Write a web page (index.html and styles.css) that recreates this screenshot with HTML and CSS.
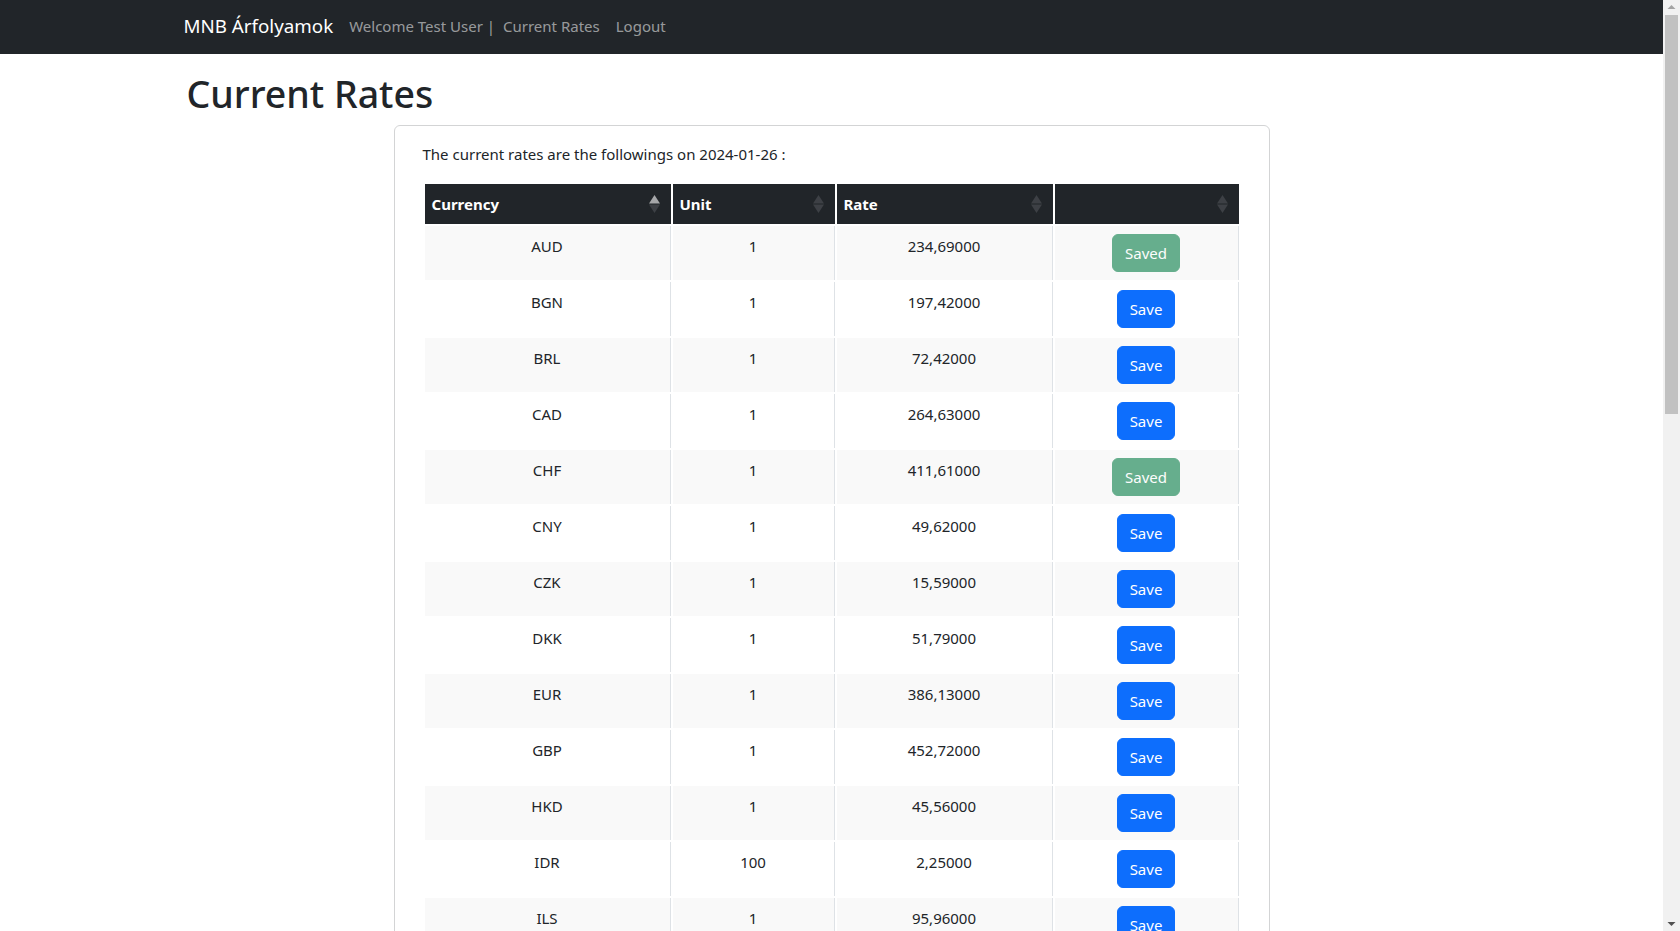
FILE: index.html
```html
<!DOCTYPE html>
<html lang="hu">
<head>
<meta charset="utf-8">
<title>MNB Árfolyamok</title>
<link rel="stylesheet" href="styles.css">
</head>
<body>
<div class="page">
<nav class="navbar">
  <div class="container nav-inner">
    <a class="brand" href="#">MNB Árfolyamok</a>
    <span class="nav-text">Welcome Test User |</span>
    <a class="nav-link" href="#">Current Rates</a>
    <a class="nav-link" href="#">Logout</a>
  </div>
</nav>
<main class="container main">
  <h1 class="title">Current Rates</h1>
  <div class="card">
    <p class="intro">The current rates are the followings on 2024-01-26 :</p>
    <table class="rates">
      <colgroup>
        <col class="c1"><col class="c2"><col class="c3"><col class="c4">
      </colgroup>
      <thead>
        <tr>
          <th><div class="th-inner"><span>Currency</span><svg class="sort" width="11" height="18" viewBox="0 0 11 18"><polygon class="on" points="5.5,0 11,8.5 0,8.5"/><polygon class="off" points="0,9.5 11,9.5 5.5,18"/></svg></div></th>
          <th><div class="th-inner"><span>Unit</span><svg class="sort" width="11" height="18" viewBox="0 0 11 18"><polygon class="off" points="5.5,0 11,8.5 0,8.5"/><polygon class="off" points="0,9.5 11,9.5 5.5,18"/></svg></div></th>
          <th><div class="th-inner"><span>Rate</span><svg class="sort" width="11" height="18" viewBox="0 0 11 18"><polygon class="off" points="5.5,0 11,8.5 0,8.5"/><polygon class="off" points="0,9.5 11,9.5 5.5,18"/></svg></div></th>
          <th><div class="th-inner"><span></span><svg class="sort" width="11" height="18" viewBox="0 0 11 18"><polygon class="off" points="5.5,0 11,8.5 0,8.5"/><polygon class="off" points="0,9.5 11,9.5 5.5,18"/></svg></div></th>
        </tr>
      </thead>
      <tbody>
        <tr><td>AUD</td><td>1</td><td>234,69000</td><td><button class="btn btn-saved" disabled>Saved</button></td></tr>
        <tr><td>BGN</td><td>1</td><td>197,42000</td><td><button class="btn btn-save">Save</button></td></tr>
        <tr><td>BRL</td><td>1</td><td>72,42000</td><td><button class="btn btn-save">Save</button></td></tr>
        <tr><td>CAD</td><td>1</td><td>264,63000</td><td><button class="btn btn-save">Save</button></td></tr>
        <tr><td>CHF</td><td>1</td><td>411,61000</td><td><button class="btn btn-saved" disabled>Saved</button></td></tr>
        <tr><td>CNY</td><td>1</td><td>49,62000</td><td><button class="btn btn-save">Save</button></td></tr>
        <tr><td>CZK</td><td>1</td><td>15,59000</td><td><button class="btn btn-save">Save</button></td></tr>
        <tr><td>DKK</td><td>1</td><td>51,79000</td><td><button class="btn btn-save">Save</button></td></tr>
        <tr><td>EUR</td><td>1</td><td>386,13000</td><td><button class="btn btn-save">Save</button></td></tr>
        <tr><td>GBP</td><td>1</td><td>452,72000</td><td><button class="btn btn-save">Save</button></td></tr>
        <tr><td>HKD</td><td>1</td><td>45,56000</td><td><button class="btn btn-save">Save</button></td></tr>
        <tr><td>IDR</td><td>100</td><td>2,25000</td><td><button class="btn btn-save">Save</button></td></tr>
        <tr><td>ILS</td><td>1</td><td>95,96000</td><td><button class="btn btn-save">Save</button></td></tr>
        <tr><td>INR</td><td>100</td><td>427,31000</td><td><button class="btn btn-save">Save</button></td></tr>
        <tr><td>ISK</td><td>100</td><td>258,96000</td><td><button class="btn btn-save">Save</button></td></tr>
        <tr><td>JPY</td><td>100</td><td>240,06000</td><td><button class="btn btn-save">Save</button></td></tr>
        <tr><td>KRW</td><td>100</td><td>26,55000</td><td><button class="btn btn-save">Save</button></td></tr>
        <tr><td>MXN</td><td>1</td><td>20,75000</td><td><button class="btn btn-save">Save</button></td></tr>
        <tr><td>MYR</td><td>1</td><td>75,15000</td><td><button class="btn btn-save">Save</button></td></tr>
        <tr><td>NOK</td><td>1</td><td>34,09000</td><td><button class="btn btn-save">Save</button></td></tr>
        <tr><td>NZD</td><td>1</td><td>216,96000</td><td><button class="btn btn-save">Save</button></td></tr>
        <tr><td>PHP</td><td>1</td><td>6,30000</td><td><button class="btn btn-save">Save</button></td></tr>
        <tr><td>PLN</td><td>1</td><td>88,51000</td><td><button class="btn btn-save">Save</button></td></tr>
        <tr><td>RON</td><td>1</td><td>77,58000</td><td><button class="btn btn-save">Save</button></td></tr>
        <tr><td>RSD</td><td>1</td><td>3,29000</td><td><button class="btn btn-save">Save</button></td></tr>
        <tr><td>RUB</td><td>1</td><td>3,99000</td><td><button class="btn btn-save">Save</button></td></tr>
        <tr><td>SEK</td><td>1</td><td>34,34000</td><td><button class="btn btn-save">Save</button></td></tr>
        <tr><td>SGD</td><td>1</td><td>265,82000</td><td><button class="btn btn-save">Save</button></td></tr>
        <tr><td>THB</td><td>1</td><td>9,99000</td><td><button class="btn btn-save">Save</button></td></tr>
        <tr><td>TRY</td><td>1</td><td>11,78000</td><td><button class="btn btn-save">Save</button></td></tr>
        <tr><td>UAH</td><td>1</td><td>9,44000</td><td><button class="btn btn-save">Save</button></td></tr>
        <tr><td>USD</td><td>1</td><td>355,33000</td><td><button class="btn btn-save">Save</button></td></tr>
        <tr><td>ZAR</td><td>1</td><td>19,08000</td><td><button class="btn btn-save">Save</button></td></tr>
      </tbody>
    </table>
  </div>
</main>
</div>
<div class="scrollbar" aria-hidden="true">
  <svg class="sb-arrow sb-up" width="17" height="17" viewBox="0 0 17 17"><polygon points="8.5,5 12.5,9 4.5,9"/></svg>
  <div class="sb-track"><div class="sb-thumb"></div></div>
  <svg class="sb-arrow sb-down" width="17" height="17" viewBox="0 0 17 17"><polygon points="4.5,8 12.5,8 8.5,12"/></svg>
</div>
</body>
</html>
```

FILE: styles.css
```css
* { box-sizing: border-box; }

html, body {
  margin: 0;
  padding: 0;
}

body {
  font-family: "Noto Sans", "Open Sans", sans-serif;
  font-size: 15px;
  line-height: 24px;
  color: #212529;
  background: #fff;
}

.page {
  width: 1663px;
}

.container {
  max-width: 1320px;
  margin: 0 auto;
  padding: 0 12px;
}

.navbar {
  background: #212529;
  height: 54px;
}

.nav-inner {
  display: flex;
  align-items: center;
  height: 54px;
  padding-bottom: 2px;
}

.brand {
  color: #fff;
  font-size: 18.75px;
  line-height: 30px;
  text-decoration: none;
  margin-right: 16px;
}

.nav-text {
  color: rgba(255, 255, 255, 0.55);
}

.nav-link {
  color: rgba(255, 255, 255, 0.55);
  text-decoration: none;
  padding: 0 8px;
}

.main {
  padding-top: 16px;
  padding-bottom: 40px;
}

.title {
  font-size: 37.5px;
  line-height: 48px;
  font-weight: 500;
  margin: 0 0 7px 0;
  padding-left: 3px;
}

.card {
  width: 876px;
  margin: 0 auto;
  border: 1px solid #d3d4d5;
  border-radius: 6px;
  padding: 16px 28px 17px;
}

.intro {
  margin: 0 0 16px 0;
}

.rates {
  width: 818px;
  table-layout: fixed;
  border-collapse: separate;
  border-spacing: 2px;
}

.c1 { width: 246px; }
.c2 { width: 162px; }
.c3 { width: 216px; }
.c4 { width: 184px; }

.rates th {
  background: #212529;
  color: #fff;
  font-weight: 700;
  text-align: left;
  padding: 8px 11px 8px 7px;
  height: 40px;
}

.th-inner {
  display: flex;
  justify-content: space-between;
  align-items: center;
}

.sort .on { fill: #a6a7a9; }
.sort .off { fill: #3d4045; }

.rates td {
  text-align: center;
  vertical-align: top;
  padding: 8px;
  border-right: 1px solid #dee2e6;
  height: 54px;
}

.rates tbody tr:nth-child(odd) td {
  background: #f9f9f9;
}

.btn {
  font-family: inherit;
  font-size: 15px;
  line-height: 24px;
  padding: 6px 12px;
  border-radius: 6px;
  border: 1px solid transparent;
  color: #fff;
  cursor: pointer;
}

.btn-save {
  background: #0d6efd;
  border-color: #0d6efd;
}

.btn-saved {
  background: #198754;
  border-color: #198754;
  opacity: 0.65;
}

/* window scrollbar of the screenshot */
.scrollbar {
  position: fixed;
  top: 0;
  right: 0;
  width: 17px;
  height: 100vh;
  background: #f1f1f1;
  display: flex;
  flex-direction: column;
}

.sb-arrow {
  flex: none;
  display: block;
}

.sb-up polygon { fill: #a3a3a3; }
.sb-down polygon { fill: #505050; }

.sb-track {
  flex: 1;
  padding: 0 2px;
}

.sb-thumb {
  height: 399px;
  margin-top: -2px;
  background: #c1c1c1;
}
```
